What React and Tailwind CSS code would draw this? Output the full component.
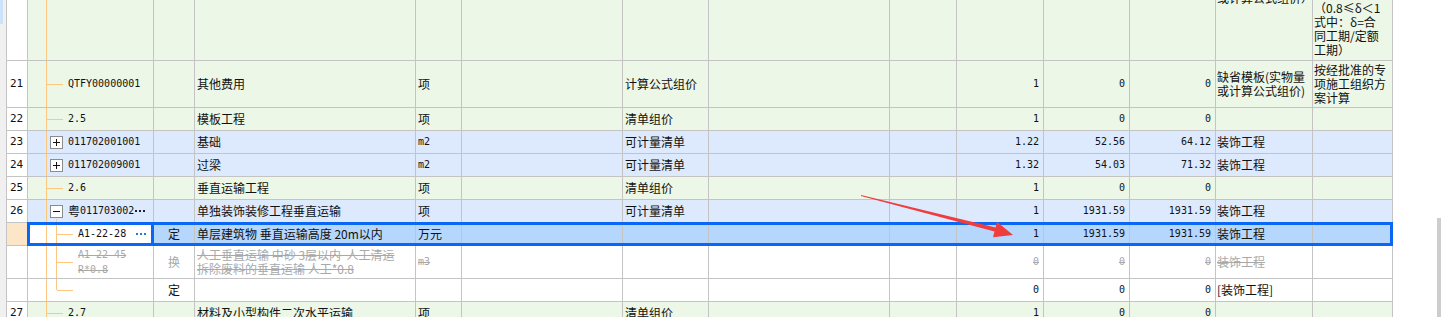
import React from "react";

const GRID =
  "grid grid-cols-[21px_126px_41px_221px_46px_161px_86px_181px_67px_87px_86px_86px_97px_80px]";
const LINE = "border-r border-b border-[#c4c4c4]";
const CJK = "font-['Noto_Sans_CJK_SC',sans-serif] text-[12px] leading-[14px]";
const MONO = "font-['DejaVu_Sans_Mono',monospace] text-[10px] leading-[12px]";
const GREEN = "bg-[#ecf7e7]";
const BLUE = "bg-[#dde9fc]";
const SEL = "bg-[#b5d6fd]";
const TREE = "bg-[#fdc77f]";
const MUTED = "text-[#a8a8a8] line-through";

function Box({ plus }) {
  return (
    <div className="h-[13px] w-[13px] shrink-0 border border-[#8c8c8c] bg-white">
      <svg width="11" height="11" viewBox="0 0 11 11">
        <rect x="2" y="5" width="7" height="1" fill="#111" />
        {plus && <rect x="5" y="2" width="1" height="7" fill="#111" />}
      </svg>
    </div>
  );
}

// code column with the tree connectors
function Tree({ bg = "", kind, children, dots }) {
  const l2 = kind === "leaf2" || kind === "last2";
  const boxed = kind === "plus" || kind === "minus";
  return (
    <div
      className={`relative ${LINE} ${bg} flex items-center ${
        l2 ? "pl-[50px]" : boxed ? "pl-[22px]" : "pl-[40px]"
      }`}
    >
      <div className={`absolute left-[18px] top-0 bottom-0 w-px ${TREE}`} />
      {kind === "leaf1" && (
        <div className={`absolute left-[19px] top-1/2 h-px w-[16px] ${TREE}`} />
      )}
      {kind === "minus" && (
        <div className={`absolute left-[28px] top-[19px] bottom-0 w-px ${TREE}`} />
      )}
      {kind === "leaf2" && (
        <div className={`absolute left-[28px] top-0 bottom-0 w-px ${TREE}`} />
      )}
      {kind === "last2" && (
        <div className={`absolute left-[28px] top-0 h-1/2 w-px ${TREE}`} />
      )}
      {l2 && (
        <div className={`absolute left-[29px] top-1/2 h-px w-[16px] ${TREE}`} />
      )}
      {boxed && <Box plus={kind === "plus"} />}
      <div className={`${boxed ? "ml-[5px]" : ""} flex items-center whitespace-nowrap`}>
        {children}
      </div>
      {dots && (
        <div className="ml-auto mr-[7px] flex gap-[2px]">
          <span className="h-[2px] w-[2px] bg-[#2878d0]" />
          <span className="h-[2px] w-[2px] bg-[#2878d0]" />
          <span className="h-[2px] w-[2px] bg-[#2878d0]" />
        </div>
      )}
    </div>
  );
}

function Num({ bg, v, muted }) {
  return (
    <div
      className={`${LINE} ${bg} ${MONO} flex items-center justify-end pr-[4px] ${
        muted ? MUTED : ""
      }`}
    >
      {v}
    </div>
  );
}

function Row({
  h,
  bg = "bg-white",
  num,
  numBg = "bg-white",
  code,
  type,
  typeMuted,
  name,
  unit,
  calc,
  qty,
  a,
  b,
  spec,
  note,
  specAlign = "justify-center",
  noteAlign = "justify-center",
  muted,
  children,
}) {
  return (
    <div className={`relative ${GRID} ${h}`}>
      <div className={`${LINE} ${numBg} ${MONO} text-[11px] flex items-center pl-[3px]`}>
        {num}
      </div>
      {code}
      <div
        className={`${LINE} ${bg} ${CJK} flex items-center justify-center ${
          typeMuted ? "text-[#a8a8a8]" : ""
        }`}
      >
        {type}
      </div>
      <div
        className={`${LINE} ${bg} ${CJK} flex flex-col justify-center whitespace-pre pl-[2px] ${
          muted ? MUTED : ""
        }`}
      >
        {name}
      </div>
      <div className={`${LINE} ${bg} flex items-center pl-[2px] ${muted ? MUTED : ""}`}>
        {unit}
      </div>
      <div className={`${LINE} ${bg}`} />
      <div className={`${LINE} ${bg} ${CJK} flex items-center pl-[2px]`}>{calc}</div>
      <div className={`${LINE} ${bg}`} />
      <div className={`${LINE} ${bg}`} />
      <Num bg={bg} v={qty} muted={muted} />
      <Num bg={bg} v={a} muted={muted} />
      <Num bg={bg} v={b} muted={muted} />
      <div
        className={`${LINE} ${bg} ${CJK} flex flex-col ${specAlign} whitespace-nowrap pl-[1px] ${
          muted ? MUTED : ""
        }`}
      >
        {spec}
      </div>
      <div className={`${LINE} ${bg} ${CJK} flex flex-col ${noteAlign} whitespace-nowrap pl-[1px]`}>
        {note}
      </div>
      {children}
    </div>
  );
}

const xiang = <span className={CJK}>项</span>;
const m2 = <span className={MONO}>m2</span>;

export default function App() {
  return (
    <div className="relative flex h-[317px] w-[1441px] overflow-hidden bg-white text-[#111]">
      <div className="w-[6px] shrink-0 bg-[#f0f0f0]">
        <div className="h-[24px] w-[3px] bg-[#cce3fb]" />
      </div>

      <div className="shrink-0 border-l border-[#c4c4c4]">
        <Row
          h="h-[61px]"
          bg={GREEN}
          code={<Tree bg={GREEN} kind="top" />}
          specAlign="justify-start"
          spec={<div className="-mt-[9px]">或计算公式组价）</div>}
          noteAlign="justify-end pb-[3px]"
          note={
            <>
              <div>（0.8≤δ＜1</div>
              <div>式中：δ=合</div>
              <div>同工期/定额</div>
              <div>工期）</div>
            </>
          }
        />
        <Row
          h="h-[47px]"
          bg={GREEN}
          num="21"
          code={
            <Tree bg={GREEN} kind="leaf1">
              <span className={MONO}>QTFY00000001</span>
            </Tree>
          }
          name="其他费用"
          unit={xiang}
          calc="计算公式组价"
          qty="1"
          a="0"
          b="0"
          spec={
            <>
              <div>缺省模板(实物量</div>
              <div>或计算公式组价)</div>
            </>
          }
          note={
            <>
              <div>按经批准的专</div>
              <div>项施工组织方</div>
              <div>案计算</div>
            </>
          }
        />
        <Row
          h="h-[23px]"
          bg={GREEN}
          num="22"
          code={
            <Tree bg={GREEN} kind="leaf1">
              <span className={MONO}>2.5</span>
            </Tree>
          }
          name="模板工程"
          unit={xiang}
          calc="清单组价"
          qty="1"
          a="0"
          b="0"
        />
        <Row
          h="h-[23px]"
          bg={BLUE}
          num="23"
          code={
            <Tree bg={BLUE} kind="plus">
              <span className={MONO}>011702001001</span>
            </Tree>
          }
          name="基础"
          unit={m2}
          calc="可计量清单"
          qty="1.22"
          a="52.56"
          b="64.12"
          spec="装饰工程"
        />
        <Row
          h="h-[23px]"
          bg={BLUE}
          num="24"
          code={
            <Tree bg={BLUE} kind="plus">
              <span className={MONO}>011702009001</span>
            </Tree>
          }
          name="过梁"
          unit={m2}
          calc="可计量清单"
          qty="1.32"
          a="54.03"
          b="71.32"
          spec="装饰工程"
        />
        <Row
          h="h-[23px]"
          bg={GREEN}
          num="25"
          code={
            <Tree bg={GREEN} kind="leaf1">
              <span className={MONO}>2.6</span>
            </Tree>
          }
          name="垂直运输工程"
          unit={xiang}
          calc="清单组价"
          qty="1"
          a="0"
          b="0"
        />
        <Row
          h="h-[23px]"
          bg={BLUE}
          num="26"
          code={
            <Tree bg={BLUE} kind="minus">
              <span className={CJK}>粤</span>
              <span className={MONO}>011703002</span>
              <span className="ml-[1px] flex gap-[2px]">
                <span className="h-[2px] w-[2px] bg-[#222]" />
                <span className="h-[2px] w-[2px] bg-[#222]" />
                <span className="h-[2px] w-[2px] bg-[#222]" />
              </span>
            </Tree>
          }
          name="单独装饰装修工程垂直运输"
          unit={xiang}
          calc="可计量清单"
          qty="1"
          a="1931.59"
          b="1931.59"
          spec="装饰工程"
        />
        <Row
          h="h-[23px]"
          bg={SEL}
          numBg="bg-[#fde6c8]"
          code={
            <Tree bg="bg-white" kind="leaf2" dots>
              <span className={MONO}>A1-22-28</span>
            </Tree>
          }
          type="定"
          name="单层建筑物 垂直运输高度 20m以内"
          unit={<span className={CJK}>万元</span>}
          qty="1"
          a="1931.59"
          b="1931.59"
          spec="装饰工程"
        >
          <div className="pointer-events-none absolute left-[20px] right-0 top-[-1px] bottom-0 border-[3px] border-[#0a66f5]" />
          <div className="pointer-events-none absolute left-[20px] w-[127px] top-[-1px] bottom-0 border-[3px] border-[#0a66f5]" />
        </Row>
        <Row
          h="h-[33px]"
          muted
          code={
            <Tree kind="leaf2">
              <div className={`${MONO} leading-[15px] ${MUTED}`}>
                <div>A1-22-45</div>
                <div>R*0.8</div>
              </div>
            </Tree>
          }
          type="换"
          typeMuted
          name={
            <>
              <div>人工垂直运输 中砂 3层以内  人工清运</div>
              <div>拆除废料的垂直运输 人工*0.8</div>
            </>
          }
          unit={<span className={`${MONO} text-[9px]`}>m3</span>}
          qty="0"
          a="0"
          b="0"
          spec="装饰工程"
        />
        <Row
          h="h-[23px]"
          code={<Tree kind="last2" />}
          type="定"
          qty="0"
          a="0"
          b="0"
          spec="[装饰工程]"
        />
        <Row
          h="h-[23px]"
          bg={GREEN}
          num="27"
          code={
            <Tree bg={GREEN} kind="leaf1">
              <span className={MONO}>2.7</span>
            </Tree>
          }
          name="材料及小型构件二次水平运输"
          unit={xiang}
          calc="清单组价"
          qty="1"
          a="0"
          b="0"
        />
      </div>

      <div className="flex flex-1 justify-end">
        <div className="mt-[218px] h-[120px] w-[4px] bg-[#cdcdcd]" />
      </div>

      <svg
        className="pointer-events-none absolute left-0 top-0"
        width="1441"
        height="317"
        viewBox="0 0 1441 317"
      >
        <polygon
          points="861,195 995.5,227.4 997,221.8 1013,235 993,237.2 994.5,231.4 861,196"
          fill="#f03c3c"
        />
      </svg>
    </div>
  );
}
